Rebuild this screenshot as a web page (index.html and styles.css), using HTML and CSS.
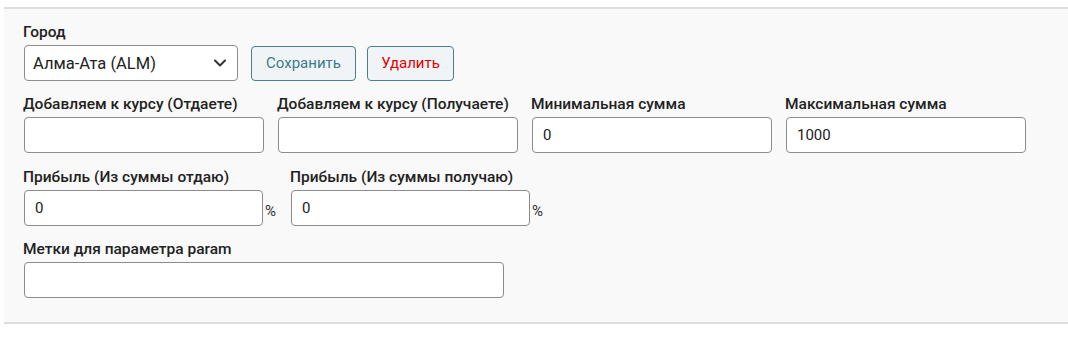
FILE: index.html
```html
<!DOCTYPE html>
<html lang="ru">
<head>
<meta charset="utf-8">
<title>Настройки города</title>
<link rel="stylesheet" href="styles.css">
</head>
<body>
<div class="panel">
  <div class="row">
    <div class="field">
      <label class="lbl">Город</label>
      <div class="controls">
        <div class="select">
          <span class="select-text">Алма-Ата (ALM)</span>
          <svg class="chev" width="14" height="10" viewBox="0 0 14 10"><path d="M2 2.5 L7 7.5 L12 2.5" fill="none" stroke="#333" stroke-width="2" stroke-linecap="round" stroke-linejoin="round"/></svg>
        </div>
        <div class="btns">
          <button class="btn btn-save">Сохранить</button>
          <button class="btn btn-del">Удалить</button>
        </div>
      </div>
    </div>
  </div>
  <div class="row">
    <div class="field">
      <label class="lbl">Добавляем к курсу (Отдаете)</label>
      <input class="inp" type="text" value="">
    </div>
    <div class="field">
      <label class="lbl">Добавляем к курсу (Получаете)</label>
      <input class="inp" type="text" value="">
    </div>
    <div class="field">
      <label class="lbl">Минимальная сумма</label>
      <input class="inp" type="text" value="0">
    </div>
    <div class="field">
      <label class="lbl">Максимальная сумма</label>
      <input class="inp" type="text" value="1000">
    </div>
  </div>
  <div class="row row-pct">
    <div class="field">
      <label class="lbl">Прибыль (Из суммы отдаю)</label>
      <div class="pct-wrap"><input class="inp inp-pct" type="text" value="0"><span class="pct">%</span></div>
    </div>
    <div class="field">
      <label class="lbl">Прибыль (Из суммы получаю)</label>
      <div class="pct-wrap"><input class="inp inp-pct" type="text" value="0"><span class="pct">%</span></div>
    </div>
  </div>
  <div class="row row-last">
    <div class="field">
      <label class="lbl">Метки для параметра param</label>
      <input class="inp inp-wide" type="text" value="">
    </div>
  </div>
</div>
</body>
</html>
```
FILE: styles.css
```css
html, body {
  margin: 0;
  padding: 0;
  background: #ffffff;
  font-family: Roboto, "Liberation Sans", sans-serif;
}
body {
  padding-top: 7px;
}
.panel {
  margin-left: 4px;
  background: #f9f9f9;
  border-top: 2px solid #dedede;
  border-bottom: 2px solid #dedede;
  padding: 11px 0 24px 20px;
  display: flex;
  flex-direction: column;
}
.row {
  display: flex;
  gap: 14px;
  margin-bottom: 11px;
}
.row-pct {
  gap: 15px;
  margin-top: 1px;
}
.row-last {
  margin-bottom: 0;
}
.field {
  display: flex;
  flex-direction: column;
}
.lbl {
  font-size: 15.5px;
  font-weight: 500;
  color: #222;
  line-height: 24px;
  margin-bottom: 1px;
  margin-left: -1px;
}
.controls {
  display: flex;
  gap: 13px;
  align-items: center;
}
.btns {
  display: flex;
  gap: 11px;
}
.select {
  box-sizing: border-box;
  width: 214px;
  height: 36px;
  border: 1px solid #8c8c8c;
  border-radius: 4px;
  background: #fff;
  display: flex;
  align-items: center;
  justify-content: space-between;
  padding: 0 10px 0 8px;
}
.select-text {
  font-size: 16.5px;
  color: #222;
}
.chev {
  display: block;
}
.btn {
  box-sizing: border-box;
  height: 35px;
  border: 1px solid #497f8e;
  border-radius: 4px;
  background: #f1f4f7;
  font-family: Roboto, "Liberation Sans", sans-serif;
  font-size: 15px;
  padding: 0 12px;
}
.btn-save {
  color: #3b7b8c;
  width: 105px;
}
.btn-del {
  color: #e00000;
  width: 87px;
}
.inp {
  box-sizing: border-box;
  width: 240px;
  height: 36px;
  border: 1px solid #8c8c8c;
  border-radius: 4px;
  background: #fff;
  font-family: Roboto, "Liberation Sans", sans-serif;
  font-size: 15px;
  color: #222;
  padding: 0 10px;
  margin: 0;
}
.pct-wrap {
  display: flex;
  align-items: center;
}
.inp-pct {
  width: 239px;
}
.pct {
  font-size: 15px;
  color: #333;
  margin-left: 2px;
  margin-top: 5px;
}
.inp-wide {
  width: 480px;
}
```
